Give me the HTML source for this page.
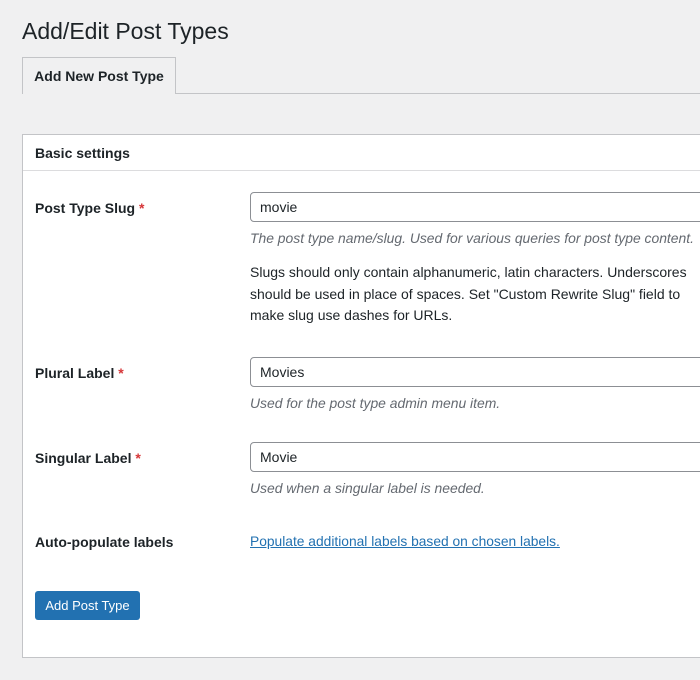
<!DOCTYPE html>
<html><head><style>
body{margin:0;width:700px;height:680px;background:#f0f0f1;font-family:"Liberation Sans",sans-serif;color:#1d2327;position:relative;overflow:hidden}
.a{position:absolute;white-space:nowrap}
h1{position:absolute;left:22px;top:17px;margin:0;font-size:23px;font-weight:400;line-height:29px}
.tab{position:absolute;left:22px;top:57px;width:154px;height:37px;border:1px solid #c3c4c7;border-bottom:none;background:#f0f0f1;box-sizing:border-box;font-weight:700;font-size:14px;line-height:36px;text-align:center;z-index:2}
.tabline{position:absolute;left:22px;right:0;top:93px;border-top:1px solid #c3c4c7}
.panel{position:absolute;left:22px;top:134px;width:700px;height:524px;background:#fff;border:1px solid #c3c4c7;box-sizing:border-box}
.hsep{position:absolute;left:23px;right:0;top:170px;border-top:1px solid #dcdcde}
.lbl{font-weight:700;font-size:14px;left:35px}
.lbl span{color:#d63638}
.inp{position:absolute;left:250px;width:470px;height:30px;border:1px solid #8c8f94;border-radius:4px;box-sizing:border-box;font-size:14px;line-height:28px;padding-left:9px}
.desc{left:250px;font-style:italic;font-size:13.9px;color:#646970}
.p{left:250px;font-size:14px;line-height:21.5px}
a{color:#2271b1;text-decoration:underline}
.btn{position:absolute;left:35px;top:591px;width:105px;height:29px;background:#2271b1;color:#fff;border-radius:3px;font-size:13px;line-height:29px;text-align:center}
</style></head><body>
<h1>Add/Edit Post Types</h1>
<div class="tabline"></div>
<div class="tab">Add New Post Type</div>
<div class="panel"></div>
<div class="a" style="left:35px;top:145px;font-weight:700;font-size:14px">Basic settings</div>
<div class="hsep"></div>
<div class="a lbl" style="top:200px">Post Type Slug <span>*</span></div>
<div class="inp" style="top:192px">movie</div>
<div class="a desc" style="top:230px">The post type name/slug. Used for various queries for post type content.</div>
<div class="a p" style="top:262px">Slugs should only contain alphanumeric, latin characters. Underscores<br>should be used in place of spaces. Set "Custom Rewrite Slug" field to<br>make slug use dashes for URLs.</div>
<div class="a lbl" style="top:365px">Plural Label <span>*</span></div>
<div class="inp" style="top:357px">Movies</div>
<div class="a desc" style="top:395px">Used for the post type admin menu item.</div>
<div class="a lbl" style="top:450px">Singular Label <span>*</span></div>
<div class="inp" style="top:442px">Movie</div>
<div class="a desc" style="top:480px">Used when a singular label is needed.</div>
<div class="a lbl" style="top:534px">Auto-populate labels</div>
<div class="a" style="left:250px;top:534px;font-size:13.8px"><a>Populate additional labels based on chosen labels.</a></div>
<div class="btn">Add Post Type</div>
</body></html>
